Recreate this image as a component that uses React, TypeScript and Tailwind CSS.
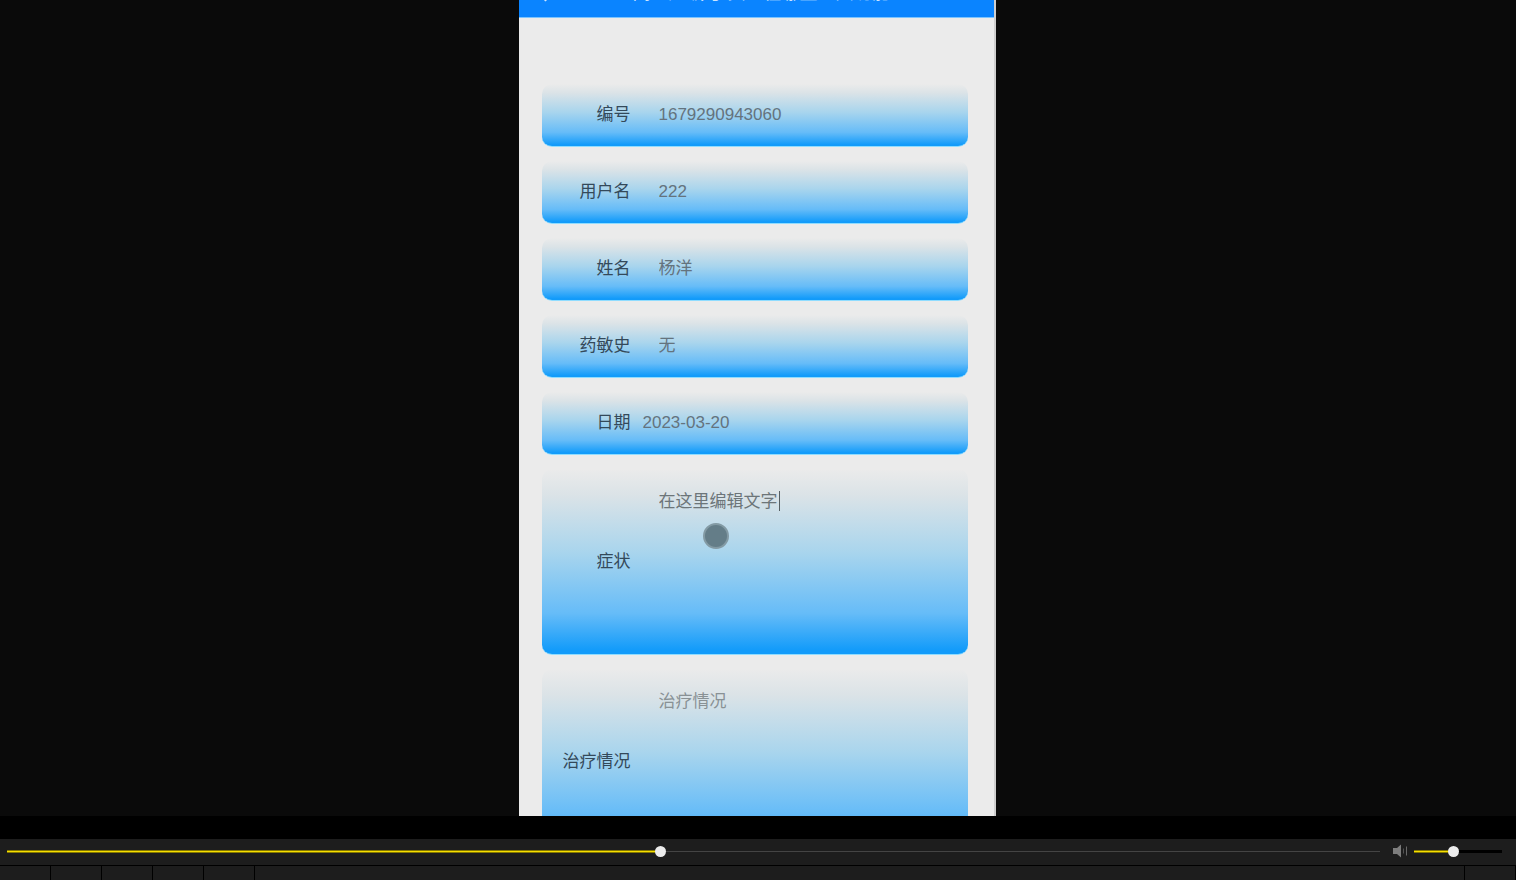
import { useState } from 'react';

const FONT = "font-['Liberation_Sans','Noto_Sans_CJK_SC',sans-serif]";

const CARD =
    'flex items-center rounded-[10px] bg-[linear-gradient(to_bottom,#ebebeb_0%,#dbe3e7_14%,#a9d5ed_45%,#66bcf8_78%,#129bfa_98%)] border-b border-[#8fdcff] text-[17px]';

const SLIDER =
    'block appearance-none bg-transparent h-[11px] outline-none cursor-pointer [&::-webkit-slider-thumb]:appearance-none [&::-webkit-slider-thumb]:size-[11px] [&::-webkit-slider-thumb]:rounded-full [&::-webkit-slider-thumb]:bg-[#ececec]';

const fields = [
    { id: 'code', label: '编号', value: '1679290943060' },
    { id: 'username', label: '用户名', value: '222' },
    { id: 'name', label: '姓名', value: '杨洋' },
    { id: 'allergy', label: '药敏史', value: '无' },
    { id: 'date', label: '日期', value: '2023-03-20' },
];

function Label({ id, text }: { id: string; text: string }) {
    return (
        <label htmlFor={id} className="w-[89px] shrink-0 text-right text-[#34495a]">
            {text}
        </label>
    );
}

function Field({ id, label, value }: { id: string; label: string; value: string }) {
    return (
        <div className={`${CARD} h-[63px]`}>
            <Label id={id} text={label} />
            <input
                id={id}
                defaultValue={value}
                className={`min-w-0 flex-1 bg-transparent text-[#64737e] outline-none ${id === 'date' ? 'ml-3' : 'ml-7'}`}
            />
        </div>
    );
}

// Thin yellow line up to the thumb, base colour after it
function Track({ percent, base }: { percent: number; base: string }) {
    return (
        <div className="pointer-events-none absolute inset-0 flex items-center">
            <div className="h-[3px] border-y border-[#857900] bg-[#f7df00]" style={{ width: `${percent}%` }}></div>
            <div className={`flex-1 ${base}`}></div>
        </div>
    );
}

export default function App() {
    const [progress, setProgress] = useState(47.6);
    const [volume, setVolume] = useState(44);

    return (
        <div className={`flex h-screen flex-col overflow-hidden bg-black ${FONT}`}>
            {/* Video */}
            <main className="flex min-h-0 flex-1 justify-center bg-[#0a0a0a] pr-0.5">
                <div className="flex w-full max-w-[477px] flex-col overflow-hidden border-r-2 border-[#cfcfcf] bg-[#ebebeb]">
                    <header className="flex h-[18px] shrink-0 items-end border-b border-[#7cc4ff] bg-[#0a84ff] px-5 pb-[14px] text-white/80">
                        <button aria-label="返回" className="shrink-0">
                            <svg width="10" height="18" viewBox="0 0 10 18" fill="none" stroke="currentColor" strokeWidth="2">
                                <path d="M8 2 2 9l5 7" />
                            </svg>
                        </button>
                        <h1 className="flex-1 text-center text-[18px] leading-5">高血压编号 真正在哪里七大功能</h1>
                    </header>

                    <form className="flex flex-col gap-[14px] pt-[66px] pr-[26px] pl-[23px]">
                        {fields.map((field) => (
                            <Field key={field.id} {...field} />
                        ))}

                        <div className={`${CARD} relative h-[186px] shrink-0`}>
                            <Label id="symptom" text="症状" />
                            <textarea
                                id="symptom"
                                defaultValue="在这里编辑文字"
                                className="ml-7 h-[146px] min-w-0 flex-1 resize-none bg-transparent text-[#6c7579] outline-none"
                            />
                            {/* Text caret and touch point */}
                            <span className="absolute top-[22px] left-[237px] h-5 w-px bg-[#555f63]"></span>
                            <span className="absolute top-[54px] left-[161px] size-[26px] rounded-full border-2 border-[#839aa4] bg-[#647d88]"></span>
                        </div>

                        <div className={`${CARD} h-[186px] shrink-0`}>
                            <Label id="treatment" text="治疗情况" />
                            <textarea
                                id="treatment"
                                placeholder="治疗情况"
                                className="ml-7 h-[146px] min-w-0 flex-1 resize-none bg-transparent outline-none placeholder:text-[#899195]"
                            />
                        </div>
                    </form>
                </div>
            </main>

            {/* Player controls */}
            <footer className="shrink-0 pt-[23px]">
                <div className="flex h-[26px] items-center bg-[#1d1d1d] pr-[14px] pb-0.5 pl-[7px]">
                    <div className="relative flex-1">
                        <Track percent={progress} base="h-px bg-[#444444]" />
                        <input
                            type="range"
                            aria-label="播放进度"
                            step="0.1"
                            value={progress}
                            onChange={(e) => setProgress(Number(e.target.value))}
                            className={`${SLIDER} relative w-full`}
                        />
                    </div>
                    <button aria-label="静音" className="mr-[6px] ml-3 text-[#7d7d7d]">
                        <svg width="16" height="14" viewBox="0 0 16 14" fill="currentColor">
                            <path d="M1 4h4l4-3.500v13L5 10H1z" />
                            <path d="M11 4.500h1v5h-1z" opacity=".55" />
                            <path d="M14 2.500h1v9h-1z" opacity=".8" />
                        </svg>
                    </button>
                    <div className="relative w-[88px]">
                        <Track percent={volume} base="h-[3px] bg-black" />
                        <input
                            type="range"
                            aria-label="音量"
                            value={volume}
                            onChange={(e) => setVolume(Number(e.target.value))}
                            className={`${SLIDER} relative w-full`}
                        />
                    </div>
                </div>
                <div className="flex h-[15px] border-t border-black bg-[#1d1d1d]">
                    {['停止', '上一个', '播放', '下一个', '打开'].map((name) => (
                        <button key={name} aria-label={name} className="w-[51px] border-r border-black"></button>
                    ))}
                    <button aria-label="全屏" className="ml-auto w-[52px] border-x border-black"></button>
                </div>
            </footer>
        </div>
    );
}
